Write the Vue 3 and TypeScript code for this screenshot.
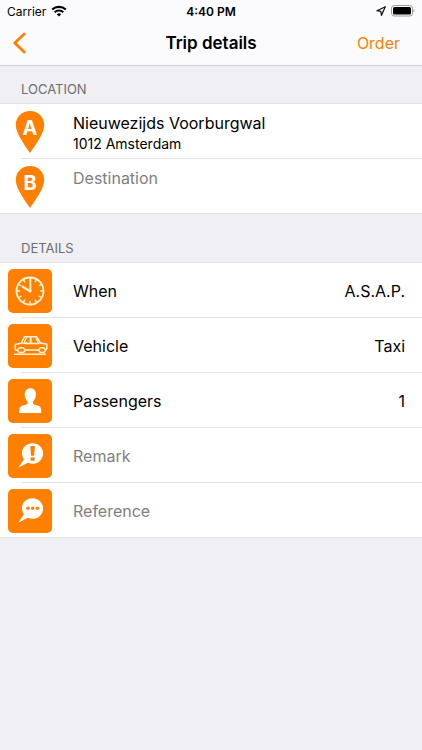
<script setup lang="ts">
import { ref } from 'vue'

interface Place {
  id: string
  marker: string
  title: string
  subtitle?: string
  empty?: boolean
}

interface Choice {
  icon: 'clock' | 'car' | 'person'
  label: string
  value: string
}

const places: Place[] = [
  { id: 'pickup', marker: 'A', title: 'Nieuwezijds Voorburgwal', subtitle: '1012 Amsterdam' },
  { id: 'destination', marker: 'B', title: 'Destination', empty: true },
]

const choices: Choice[] = [
  { icon: 'clock', label: 'When', value: 'A.S.A.P.' },
  { icon: 'car', label: 'Vehicle', value: 'Taxi' },
  { icon: 'person', label: 'Passengers', value: '1' },
]

const ticks = [30, 60, 90, 120, 150, 180, 210, 240, 270, 300, 330]

const remark = ref('')
const reference = ref('')
</script>

<template>
  <div class="screen">
    <header class="top">
      <div class="status">
        <div class="status-side">
          <span>Carrier</span>
          <svg class="wifi" width="16" height="12" viewBox="0 0 16 12" aria-hidden="true">
            <path d="M1.2 4.6a9.8 9.8 0 0 1 13.6 0" fill="none" stroke="#000" stroke-width="2.1" />
            <path d="M3.7 7.3a6.2 6.2 0 0 1 8.6 0" fill="none" stroke="#000" stroke-width="2" />
            <path d="M8 11.6 5.8 9.3a3.2 3.2 0 0 1 4.400 0z" fill="#000" />
          </svg>
        </div>
        <span class="time">4:40 PM</span>
        <div class="status-side end">
          <svg width="10" height="10" viewBox="0 0 10 10" aria-hidden="true">
            <path d="M9.300.8.9 4.700l3.900.7.7 3.900z" fill="none" stroke="#111" stroke-width="1.2" stroke-linejoin="round" />
          </svg>
          <svg width="24" height="12" viewBox="0 0 24 12" aria-hidden="true">
            <rect x="0.5" y="0.5" width="21" height="10.500" rx="2.800" fill="#fff" stroke="#999" />
            <rect x="2" y="2" width="18" height="7.500" rx="1.500" fill="#000" />
            <path d="M22.500 4v3.500a2 2 0 0 0 0-3.500z" fill="#999" />
          </svg>
        </div>
      </div>
      <nav class="nav">
        <div class="nav-side">
          <button class="nav-button" type="button" aria-label="Back">
            <svg width="14" height="22" viewBox="0 0 14 22" aria-hidden="true">
              <path d="M12.200 2 2.800 11l9.400 9" fill="none" stroke="#ff8000" stroke-width="2.800" stroke-linecap="round" stroke-linejoin="round" />
            </svg>
          </button>
        </div>
        <h1 class="title">Trip details</h1>
        <div class="nav-side end">
          <button class="nav-button order" type="button">Order</button>
        </div>
      </nav>
    </header>

    <main>
      <section>
        <h2 class="heading">LOCATION</h2>
        <ul class="list">
          <li v-for="place in places" :key="place.id">
            <button class="row place" type="button">
              <svg class="pin" width="30" height="42" viewBox="0 0 30 42" aria-hidden="true">
                <path d="M15 0C7 0 .8 6 .8 13.800.8 22.500 9.500 34 15 42 20.500 34 29.200 22.500 29.200 13.800 29.200 6 23 0 15 0z" fill="#ff8000" />
                <text class="pin-letter" x="15" y="24" text-anchor="middle">{{ place.marker }}</text>
              </svg>
              <span class="place-text">
                <span class="label" :class="{ muted: place.empty }">{{ place.title }}</span>
                <span v-if="place.subtitle" class="subtitle">{{ place.subtitle }}</span>
              </span>
            </button>
          </li>
        </ul>
      </section>

      <section>
        <h2 class="heading later">DETAILS</h2>
        <ul class="list">
          <li v-for="choice in choices" :key="choice.label">
            <button class="row" type="button">
              <svg class="tile" viewBox="0 0 44 44" aria-hidden="true">
                <g v-if="choice.icon === 'clock'" fill="none" stroke="#fff3d6" stroke-width="1.8">
                  <circle cx="22" cy="22" r="13.500" />
                  <path v-for="angle in ticks" :key="angle" d="M22 9v3" stroke-width="1.4" :transform="`rotate(${angle} 22 22)`" />
                  <path d="M22.300 8.500V22" stroke-width="2" />
                  <path d="M22 22.300 14 17.200" stroke-width="2.2" />
                  <circle cx="22.200" cy="22.200" r="1" fill="#fff3d6" stroke-width="1" />
                </g>
                <g v-else-if="choice.icon === 'car'" fill="none" stroke="#fff3d6" stroke-width="1.5" stroke-linejoin="round">
                  <path d="M9.800 26.300H8L7.200 25V20.500L13 19.300 16.500 12.800H28.800L32.500 19 38.800 20.300V24.500L37.500 26.300" />
                  <path d="M9.800 27V25.300L11.500 23.800H15L16.800 25.500V27L15.300 28.600H11.300zM31 27V25.300L32.500 23.800H35.700L37.300 25.500V27L35.800 28.600H32.500z" />
                  <path d="M16.800 26H31M16.300 19.400H31.500" />
                  <path d="M22.600 13V19.300" stroke-width="2" />
                  <path d="M13.500 19.200H20M18.500 13.800 15.800 19M27.700 13.800 30.500 19" stroke-width="1.300" />
                  <path d="M6 30.200H38" stroke-width="1.500" />
                </g>
                <path v-else d="M22.500 9.200c-3.700 0-5.800 2.600-5.800 6.300 0 3 1.300 5.500 2.800 7v2.200c-1.500 1-4.300 1.400-6 2.400-2 1.100-2.300 3.500-2.300 6.900h22.100c0-3.400-.3-5.800-2.300-6.900-1.700-1-4.500-1.400-6-2.400v-2.200c1.500-1.500 2.900-4 2.900-7 0-3.700-1.700-6.300-5.400-6.300z" fill="#fff" />
              </svg>
              <span class="label">{{ choice.label }}</span>
              <span class="value">{{ choice.value }}</span>
            </button>
          </li>
          <li>
            <label class="row">
              <svg class="tile" viewBox="0 0 44 44" aria-hidden="true">
                <path d="M24.500 9.200c-6 0-10.500 4.300-10.500 10 0 2.300.8 4.500 2 6.100L10.200 33.800 20 28.800c1.400.7 2.900 1 4.500 1 6 0 10.600-4.600 10.600-10.400s-4.600-10.200-10.600-10.200z" fill="#fff" />
                <path d="M22.300 12h4.600l-.7 9.800h-3.200z" fill="#ff8000" />
                <rect x="22.600" y="23.300" width="4" height="3.500" fill="#ff8000" />
              </svg>
              <input v-model="remark" class="field" type="text" placeholder="Remark" aria-label="Remark" />
            </label>
          </li>
          <li>
            <label class="row">
              <svg class="tile" viewBox="0 0 44 44" aria-hidden="true">
                <path d="M24.500 9.200c-6 0-10.500 4.300-10.500 10 0 2.300.8 4.500 2 6.100L10.200 33.800 20 28.800c1.400.7 2.900 1 4.500 1 6 0 10.600-4.600 10.600-10.400s-4.600-10.200-10.600-10.200z" fill="#fff" />
                <circle cx="20" cy="19.200" r="1.700" fill="#ff8000" />
                <circle cx="24.700" cy="19.200" r="1.700" fill="#ff8000" />
                <circle cx="29.400" cy="19.200" r="1.700" fill="#ff8000" />
              </svg>
              <input v-model="reference" class="field" type="text" placeholder="Reference" aria-label="Reference" />
            </label>
          </li>
        </ul>
      </section>
    </main>
  </div>
</template>

<style>
body {
  background: #efeff4;
}
</style>

<style scoped>
.screen {
  min-height: 100vh;
  background: #efeff4;
  color: #000;
  font-family: Inter, 'Liberation Sans', sans-serif;
  font-size: 16px;
}

button,
input {
  margin: 0;
  padding: 0;
  border: 0;
  background: none;
  color: inherit;
  font: inherit;
}

button {
  cursor: pointer;
}

svg {
  display: block;
  flex: none;
}

.top {
  background: #fbfbfd;
  border-bottom: 1px solid #d2d2d5;
}

.status,
.nav {
  display: flex;
  align-items: center;
}

.status {
  height: 22px;
  padding: 0 7px;
  font-size: 12px;
}

.status-side,
.nav-side {
  display: flex;
  flex: 1;
  align-items: center;
  gap: 5px;
}

.end {
  justify-content: flex-end;
}

.time {
  font-weight: 600;
}

.nav {
  height: 41px;
  padding: 0 12px 2px;
}

.title {
  margin: 0;
  font-size: 17px;
  font-weight: 600;
}

.nav-button {
  color: #ff8000;
  line-height: 22px;
}

.order {
  padding-right: 10px;
}

.heading {
  margin: 0;
  padding: 14px 21px 6px;
  color: #6d6d72;
  font-size: 13px;
  font-weight: 400;
  line-height: 18px;
}

.later {
  padding-top: 25px;
}

.list {
  margin: 0;
  padding: 0;
  background: #fff;
  list-style: none;
  box-shadow: 0 -1px #e2e2e6;
}

.list li {
  background: linear-gradient(#e4e4e7, #e4e4e7) 21px 100% / 100% 1px no-repeat;
}

.list li:last-child {
  background-position: 0 100%;
}

.row {
  display: flex;
  align-items: center;
  width: 100%;
  height: 55px;
  padding: 0 17px 0 8px;
  text-align: left;
}

.row,
.row * {
  box-sizing: border-box;
}

.tile {
  width: 44px;
  height: 44px;
  margin-right: 21px;
  border-radius: 5px;
  background: #ff8000;
}

.label,
.value {
  line-height: 22px;
}

.value {
  margin-left: auto;
}

.muted,
.field::placeholder {
  color: #808080;
  opacity: 1;
}

.field {
  flex: 1;
  min-width: 0;
  height: 44px;
  outline: none;
}

.place {
  align-items: flex-start;
  padding: 7px 17px 0 15px;
}

.pin {
  margin-right: 28px;
}

.pin-letter {
  fill: #fff;
  font-size: 20px;
  font-weight: 700;
}

.place-text {
  display: flex;
  flex-direction: column;
  padding-top: 1px;
}

.subtitle {
  font-size: 14px;
  line-height: 20px;
}
</style>
